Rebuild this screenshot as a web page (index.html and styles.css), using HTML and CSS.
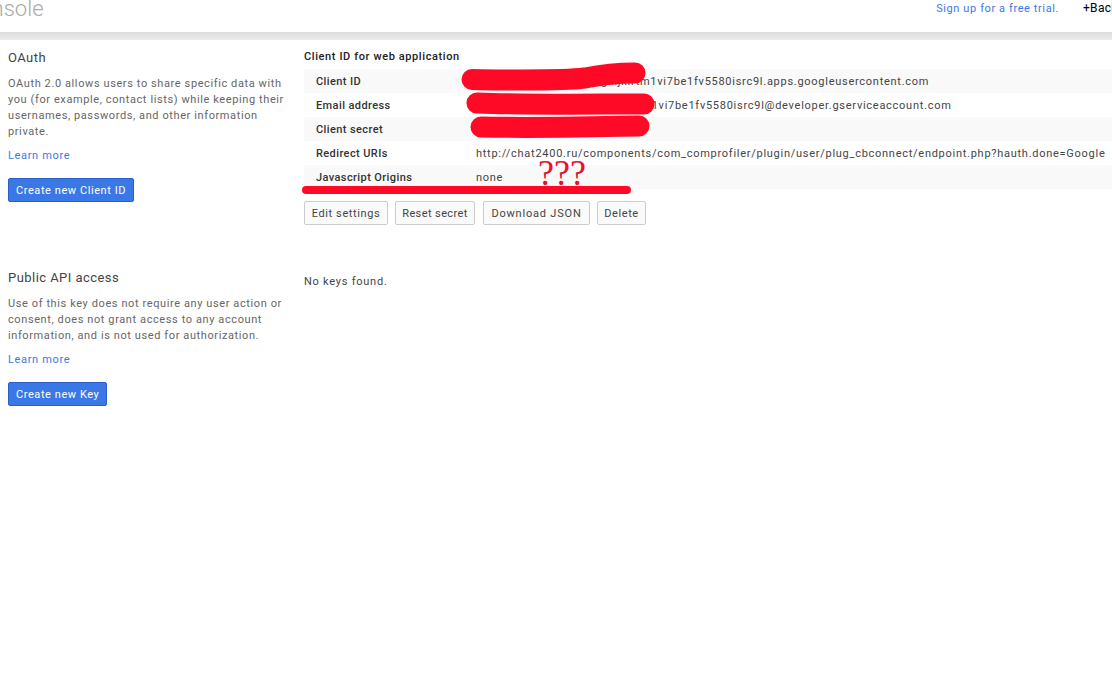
FILE: index.html
```html
<!DOCTYPE html>
<html lang="en">
<head>
  <meta charset="UTF-8">
  <title>Console</title>
  <link rel="stylesheet" href="styles.css">
</head>
<body>

  <header>
    <div class="brand">Console</div>
    <a href="#" class="trial">Sign up for a free trial.</a>
    <span class="backup">+Backup</span>
  </header>
  <div class="band"></div>

  <main>
    <section class="oauth">
      <div class="side">
        <h2>OAuth</h2>
        <p>OAuth 2.0 allows users to share specific data with you (for example, contact lists) while keeping their usernames, passwords, and other information private.</p>
        <a href="#" class="more">Learn more</a>
        <button class="primary">Create new Client ID</button>
      </div>
      <div class="content">
        <h3>Client ID for web application</h3>
        <table>
          <tr><th>Client ID</th><td>000000000000-abcdefghijklrtm1vi7be1fv5580isrc9l.apps.googleusercontent.com</td></tr>
          <tr><th>Email address</th><td>000000000000-abcdefghijklmm1vi7be1fv5580isrc9l@developer.gserviceaccount.com</td></tr>
          <tr><th>Client secret</th><td>abcdefghijklmnop</td></tr>
          <tr><th>Redirect URIs</th><td>http://chat2400.ru/components/com_comprofiler/plugin/user/plug_cbconnect/endpoint.php?hauth.done=Google</td></tr>
          <tr><th>Javascript Origins</th><td>none</td></tr>
        </table>
        <div class="actions">
          <button class="edit">Edit settings</button>
          <button class="reset">Reset secret</button>
          <button class="download">Download JSON</button>
          <button class="delete">Delete</button>
        </div>
      </div>
    </section>

    <section class="keys">
      <div class="side">
        <h2>Public API access</h2>
        <p>Use of this key does not require any user action or consent, does not grant access to any account information, and is not used for authorization.</p>
        <a href="#" class="more">Learn more</a>
        <button class="primary">Create new Key</button>
      </div>
      <div class="content">
        <p class="nokeys">No keys found.</p>
      </div>
    </section>
  </main>

  <!-- marker scribbles drawn over the screenshot -->
  <svg class="scribble" width="1112" height="682" viewBox="0 0 1112 682">
    <g fill="none" stroke="#ff0a26" stroke-linecap="round" stroke-linejoin="round">
      <path stroke-width="21" d="M472 79.500 C510 80 560 81 585 78 C600 75 620 73 635 73" />
      <path stroke-width="21" d="M477 103 C530 105 590 104 644 104" />
      <path stroke-width="21" d="M481 127 C530 128 590 127 639 126" />
      <path stroke-width="8" d="M306 190 C400 189.500 530 190.500 627 190" />
    </g>
    <text class="marks" x="538" y="185">???</text>
  </svg>

</body>
</html>
```

FILE: styles.css
```css
body {
  margin: 0;
  font-family: Roboto, Arial, sans-serif;
  font-size: 11px;
  letter-spacing: 0.65px;
  color: #333;
  background: #fff;
  overflow: hidden;
}

header {
  height: 32px;
  display: flex;
  overflow: hidden;
  white-space: nowrap;
}

.brand {
  margin-left: -35px;
  margin-top: -4px;
  font-size: 22px;
  font-weight: 300;
  letter-spacing: 0;
  color: #aaa;
}

.trial {
  margin-left: auto;
  margin-top: 2px;
  color: #3b78e7;
  text-decoration: none;
  font-size: 11px;
  letter-spacing: 0.6px;
}

.backup {
  flex: 0 0 29px;
  min-width: 0;
  margin-left: 24px;
  margin-top: 1px;
  font-size: 12px;
  letter-spacing: 0.3px;
  color: #000;
}

.band {
  height: 8px;
  background: linear-gradient(#dcdcdc, #ebebeb);
}

section {
  display: flex;
}

.oauth {
  height: 220px;
}

.side {
  width: 280px;
  margin-left: 8px;
  flex-shrink: 0;
}

.content {
  margin-left: 16px;
  flex: 1;
}

h2 {
  margin: 9px 0 0;
  font-size: 13px;
  line-height: 17px;
  font-weight: 400;
  letter-spacing: 0.45px;
  color: #444;
}

.side p {
  margin: 10px 0 0;
  line-height: 16px;
  letter-spacing: 0.6px;
  color: #666;
  font-size: 11px;
}

.more {
  display: block;
  margin-top: 8px;
  line-height: 16px;
  color: #3b78e7;
  text-decoration: none;
}

button {
  height: 24px;
  padding: 0;
  font-family: inherit;
  font-size: 11px;
  letter-spacing: 0.6px;
  color: #444;
  background: #fafafa;
  border: 1px solid #ccc;
  border-radius: 2px;
}

.primary {
  display: block;
  margin-top: 14px;
  padding: 0 7px;
  letter-spacing: 0.57px;
  color: #fff;
  background: #3b78e7;
  border-color: #2a5fc5;
}

h3 {
  margin: 9px 0 4px;
  font-size: 11px;
  line-height: 16px;
  font-weight: 500;
  letter-spacing: 0.6px;
  color: #222;
}

table {
  width: 100%;
  border-collapse: collapse;
}

tr {
  height: 24px;
}

tr:nth-child(odd) {
  background: #f9f9f9;
}

th {
  width: 160px;
  padding: 0 0 0 12px;
  text-align: left;
  font-weight: 500;
  letter-spacing: 0.4px;
  color: #333;
}

td {
  padding: 0;
  white-space: nowrap;
  letter-spacing: 0.73px;
  color: #444;
}

.actions {
  display: flex;
  gap: 7px;
  margin-top: 12px;
}

.edit {
  width: 84px;
}

.reset {
  width: 80px;
  letter-spacing: 0.4px;
}

.download {
  width: 107px;
  margin-left: 1px;
  letter-spacing: 0.8px;
}

.delete {
  width: 49px;
}

.nokeys {
  margin: 14px 0 0;
  line-height: 16px;
  letter-spacing: 0.75px;
  color: #444;
}

.scribble {
  position: absolute;
  left: 0;
  top: 0;
  pointer-events: none;
}

.marks {
  font-family: "Liberation Serif", serif;
  font-size: 36px;
  letter-spacing: 0;
  fill: #e8112d;
}
```
